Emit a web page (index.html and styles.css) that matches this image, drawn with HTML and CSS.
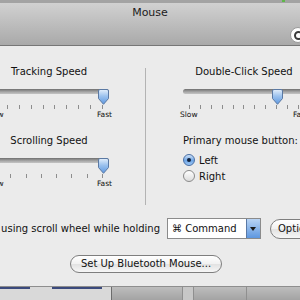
FILE: index.html
```html
<!doctype html>
<html lang="en">
<head>
    <meta charset="UTF-8">
    <title>Mouse</title>
    <link rel="stylesheet" href="styles.css">
</head>
<body>
<div class="window">
    <!-- Title bar with unified toolbar -->
    <div class="titlebar">
        <div class="title">Mouse</div>
        <span class="lights"></span>
        <span class="search"></span>
    </div>

    <div class="pane">
        <div class="columns">
            <div class="col">
                <div class="caption">Tracking Speed</div>
                <div class="slider">
                    <div class="rail">
                        <div class="track"></div>
                        <div class="knob-area">
                            <svg class="knob" style="left: 100%" viewBox="0 0 11 16" width="11" height="16">
                                <defs>
                                    <linearGradient id="kg1" x1="0" y1="0" x2="0" y2="1">
                                        <stop offset="0" stop-color="#e4effb"/>
                                        <stop offset="0.45" stop-color="#9cc2ee"/>
                                        <stop offset="1" stop-color="#5e98e0"/>
                                    </linearGradient>
                                </defs>
                                <path d="M2 0.5h7a1.5 1.5 0 0 1 1.5 1.5v7.5l-5 5.8l-5 -5.8v-7.5a1.5 1.5 0 0 1 1.5 -1.5z" fill="url(#kg1)" stroke="#5b79a3"/>
                            </svg>
                        </div>
                    </div>
                    <div class="ticks">
                        <i></i><i></i><i></i><i></i><i></i><i></i><i></i><i></i><i></i><i></i>
                    </div>
                    <div class="scale"><span>Slow</span><span>Fast</span></div>
                </div>

                <div class="caption next">Scrolling Speed</div>
                <div class="slider">
                    <div class="rail">
                        <div class="track"></div>
                        <div class="knob-area">
                            <svg class="knob" style="left: 100%" viewBox="0 0 11 16" width="11" height="16">
                                <path d="M2 0.5h7a1.5 1.5 0 0 1 1.5 1.5v7.5l-5 5.8l-5 -5.8v-7.5a1.5 1.5 0 0 1 1.5 -1.5z" fill="url(#kg1)" stroke="#5b79a3"/>
                            </svg>
                        </div>
                    </div>
                    <div class="ticks">
                        <i></i><i></i><i></i><i></i><i></i><i></i><i></i><i></i>
                    </div>
                    <div class="scale"><span>Slow</span><span>Fast</span></div>
                </div>
            </div>

            <div class="divider"></div>

            <div class="col wide">
                <div class="caption">Double-Click Speed</div>
                <div class="slider">
                    <div class="rail">
                        <div class="track"></div>
                        <div class="knob-area">
                            <svg class="knob" style="left: 80%" viewBox="0 0 11 16" width="11" height="16">
                                <path d="M2 0.5h7a1.5 1.5 0 0 1 1.5 1.5v7.5l-5 5.8l-5 -5.8v-7.5a1.5 1.5 0 0 1 1.5 -1.5z" fill="url(#kg1)" stroke="#5b79a3"/>
                            </svg>
                        </div>
                    </div>
                    <div class="ticks">
                        <i></i><i></i><i></i><i></i><i></i><i></i><i></i><i></i><i></i><i></i><i></i>
                    </div>
                    <div class="scale"><span>Slow</span><span>Fast</span></div>
                </div>

                <div class="caption next left">Primary mouse button:</div>
                <div class="radios">
                    <label class="radio"><span class="dot on"></span>Left</label>
                    <label class="radio"><span class="dot"></span>Right</label>
                </div>
            </div>
        </div>

        <div class="holding">
            <div class="holding-label"><span>Zoom using scroll wheel while holding</span></div>
            <div class="popup">
                <span class="popup-text">&#8984; Command</span>
                <span class="popup-arrow"></span>
            </div>
            <div class="pill small">Options...</div>
        </div>

        <div class="bt-row">
            <div class="pill">Set Up Bluetooth Mouse...</div>
        </div>
    </div>

    <!-- whatever is behind the window -->
    <div class="desktop">
        <div class="behind first"><i></i><i></i></div>
        <div class="behind second"></div>
        <div class="behind third"></div>
        <div class="behind fourth"></div>
    </div>
</div>
</body>
</html>
```

FILE: styles.css
```css
html, body {
    margin: 0;
    padding: 0;
}

body {
    width: 300px;
    height: 300px;
    overflow: hidden;
    font-family: "DejaVu Sans", sans-serif;
    font-size: 10px;
    color: #111;
    background: #a9a9a9;
}

.window {
    display: flex;
    flex-direction: column;
    height: 300px;
}

/* Title bar */
.titlebar {
    position: relative;
    height: 42px;
    border-top: 3px solid #a3a3a3;
    border-bottom: 1px solid #767676;
    background: linear-gradient(#d1d1d1, #a9a9a9);
}

.title {
    text-align: center;
    font-size: 11px;
    line-height: 14px;
    padding-top: 3px;
    color: #1c1c1c;
}

.lights {
    position: absolute;
    top: -3px;
    left: 282px;
    width: 3px;
    height: 2px;
    background: #5fb84a;
}

.search {
    position: absolute;
    top: 24px;
    left: 290px;
    width: 16px;
    height: 16px;
    border-radius: 50%;
    background: #fdfdfd;
    box-sizing: border-box;
    border: 1px solid #9a9a9a;
}

.search::after {
    content: "";
    position: absolute;
    left: 3px;
    top: 3px;
    width: 5px;
    height: 5px;
    border: 2px solid #3a3a3a;
    border-radius: 50%;
}

/* Content */
.pane {
    background: #ebebeb;
    padding: 19px 0 13px;
    border-bottom: 1px solid #8e8e8e;
}

.columns {
    display: grid;
    grid-template-columns: 120px 74px 122px;
    margin-left: -11px;
}

.col {
    display: flex;
    flex-direction: column;
}

.caption {
    text-align: center;
    line-height: 13px;
    white-space: nowrap;
}

.caption.next {
    margin-top: 15px;
}

.caption.left {
    text-align: left;
}

.divider {
    width: 1px;
    height: 137px;
    margin: 3px 0 0 36px;
    background: #b3b3b3;
}

/* Sliders */
.slider {
    margin-top: 9px;
}

.rail {
    position: relative;
    height: 16px;
}

.track {
    margin-top: 2px;
    height: 5px;
    border-radius: 3px;
    background: linear-gradient(#6f6f6f, #a9a9a9 60%, #c4c4c4);
}

.knob-area {
    position: absolute;
    top: 0;
    bottom: 0;
    left: 6px;
    right: 6px;
}

.knob {
    position: absolute;
    top: 0;
    margin-left: -5px;
    display: block;
}

.ticks {
    display: flex;
    justify-content: space-between;
    padding: 0 6px;
    height: 4px;
}

.ticks i {
    width: 1px;
    height: 4px;
    background: #8d8d8d;
}

.scale {
    display: flex;
    justify-content: space-between;
    margin: 1px -3px 0;
    font-size: 7.5px;
    line-height: 9px;
}

/* Radio buttons */
.radios {
    margin-top: 5px;
    display: flex;
    flex-direction: column;
}

.radio {
    display: flex;
    align-items: center;
    gap: 4px;
    height: 16px;
}

.dot {
    width: 12px;
    height: 12px;
    box-sizing: border-box;
    border-radius: 50%;
    border: 1px solid #8a8a8a;
    background: linear-gradient(#ffffff, #dcdcdc);
    display: flex;
    align-items: center;
    justify-content: center;
}

.dot.on {
    border-color: #4a6fa5;
    background: linear-gradient(#cfe2f8, #6fa6e6 55%, #9cc6f4);
}

.dot.on::after {
    content: "";
    width: 4px;
    height: 4px;
    border-radius: 50%;
    background: #10203a;
}

/* Bottom controls */
.holding {
    display: flex;
    align-items: center;
    margin-top: 13px;
    height: 21px;
    white-space: nowrap;
}

.holding > * {
    flex: none;
}

.holding-label {
    width: 160px;
    display: flex;
    justify-content: flex-end;
}

.holding-label span {
    flex: none;
}

.popup {
    display: flex;
    margin-left: 7px;
    width: 94px;
    height: 21px;
    box-sizing: border-box;
    border: 1px solid #8b8b8b;
    background: #fff;
}

.popup-text {
    flex: 1;
    padding-left: 4px;
    line-height: 19px;
}

.popup-arrow {
    width: 13px;
    position: relative;
    background: linear-gradient(#b9d4f4, #5d97e0);
    border-left: 1px solid #5a79a5;
}

.popup-arrow::after {
    content: "";
    position: absolute;
    left: 3px;
    top: 8px;
    border-left: 3px solid transparent;
    border-right: 3px solid transparent;
    border-top: 4px solid #1a1a1a;
}

.pill {
    height: 18px;
    box-sizing: border-box;
    padding: 0 10px;
    border: 1px solid #7e7e7e;
    border-radius: 9px;
    background: linear-gradient(#ffffff, #f1f1f1 50%, #e2e2e2 51%, #f6f6f6);
    line-height: 16px;
    white-space: nowrap;
}

.pill.small {
    margin-left: 9px;
    height: 20px;
    border-radius: 10px;
    line-height: 18px;
    padding-left: 7px;
}

.bt-row {
    display: flex;
    justify-content: center;
    margin: 16px 8px 0 0;
}

/* Background behind the window */
.desktop {
    flex: 1;
    display: flex;
    background: linear-gradient(#bdbdbd, #a3a3a3);
}

.behind {
    border-right: 1px solid #8f8f8f;
}

.behind.first {
    width: 111px;
    display: flex;
    gap: 22px;
    align-items: flex-start;
    background: #d9d9d9;
    border-right: 1px solid #6c6c6c;
}

.behind.first i {
    width: 30px;
    height: 2px;
    background: #3b4a7c;
}

.behind.first i + i {
    width: 50px;
}

.behind.second {
    width: 70px;
}

.behind.third {
    width: 10px;
    background: #c7c7c7;
}

.behind.fourth {
    width: 52px;
}
```
